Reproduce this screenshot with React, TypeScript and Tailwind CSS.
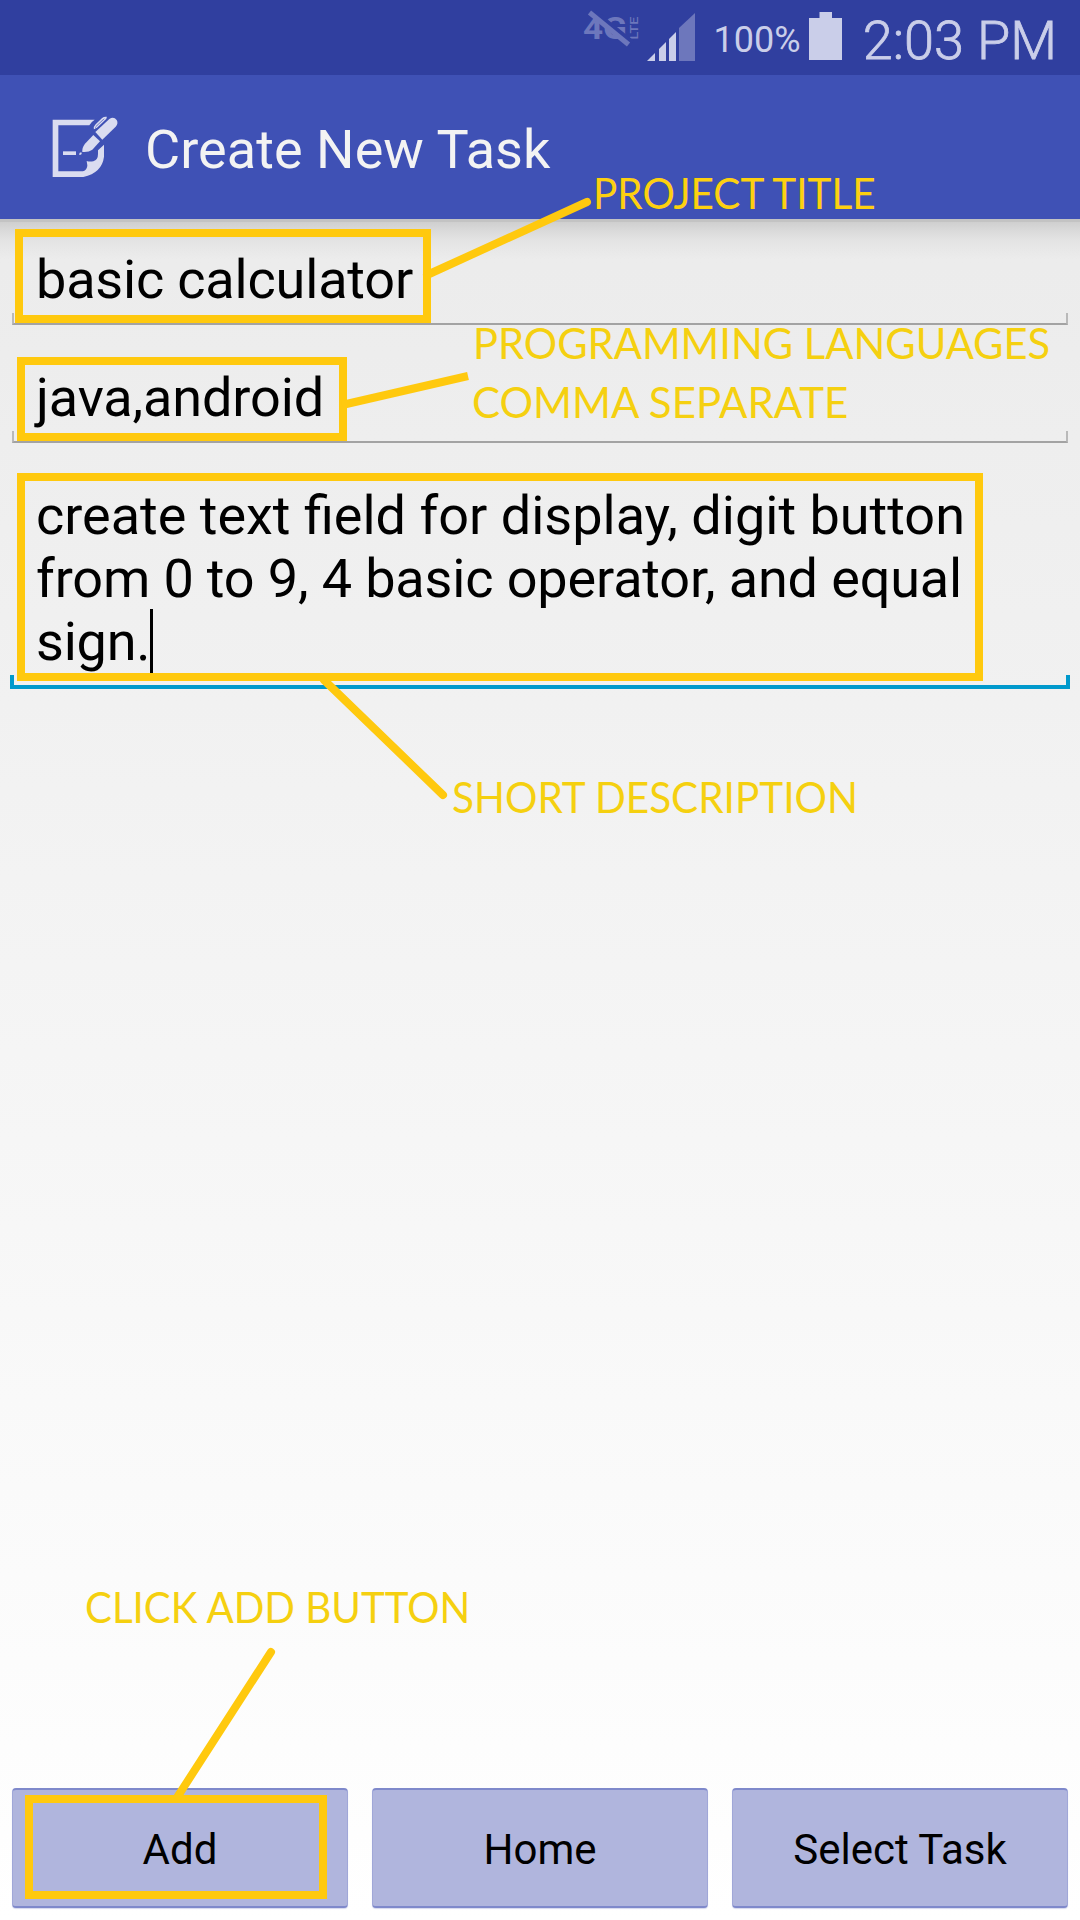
import React from "react";

function NetworkIcon() {
  return (
    <svg className="block h-[40px] w-[60px]" viewBox="0 0 60 40" fill="#6d77bc">
      <text x="1" y="31" fontFamily="Roboto" fontWeight="700" fontSize="31" textLength="44" lengthAdjust="spacingAndGlyphs">4G</text>
      <text transform="translate(55.5 31.5) rotate(-90)" fontFamily="Roboto" fontWeight="500" fontSize="11" textLength="23" lengthAdjust="spacingAndGlyphs">LTE</text>
      <path d="M13 5 L50 35" stroke="#303f9f" strokeWidth="6" />
      <path d="M7.5 4.5 L46.5 36.5" stroke="#6d77bc" strokeWidth="5" />
    </svg>
  );
}

function SignalIcon() {
  return (
    <svg className="block h-[48px] w-[48px]" viewBox="0 0 48 48" fill="#cacee9">
      <path d="M0 48 L8 40 V48Z" />
      <path d="M12 48 V36 L19 29 V48Z" />
      <path d="M22 48 V26 L29 19 V48Z" />
      <path d="M32 48 V15 L48 0 V48Z" fill="#6d77bc" />
    </svg>
  );
}

function BatteryIcon() {
  return (
    <svg className="block h-[48px] w-[33px]" viewBox="0 0 33 48" fill="#cacee9">
      <path d="M10.5 0 H23 V6 H33 V48 H0 V6 H10.5Z" />
    </svg>
  );
}

function NoteIcon() {
  return (
    <svg className="block h-[65px] w-[70px]" viewBox="150 135 210 195" fill="#dadcf0">
      <path d="M158 149 H284 Q274 155 268 166 H175 V304 H249 Q262 300 262 286 L260 273 Q268 276 280 274 Q294 270 294 252 V241 L312 224 V260 Q306 308 250 321 H158Z" />
      <path d="M189 244 H228 V255 H189Z" />
      <path d="M286 186 L328 147 Q341 138 350 150 Q356 160 347 170 L307 209Z" />
      <path d="M280 195 L300 214 L277 239 Q265 248 247 246 Q246 232 255 221Z" />
      <path d="M237 254 Q238 247 244 247 Q247 251 243 254Z" />
      <path d="M284 177 Q282 171 288 165 L308 146 Q313 142 320 143" fill="none" stroke="#dadcf0" strokeWidth="5" />
      <path d="M288 173 L318 145" fill="none" stroke="#dadcf0" strokeWidth="4" />
    </svg>
  );
}

function FieldLine() {
  return <div className="mx-3 h-3 border-x-2 border-b-2 border-x-[#b9b9b9] border-b-[#a3a3a3]" />;
}

function TaskButton({ label }: { label: string }) {
  return (
    <button className="h-[120px] w-[336px] rounded-[4px] border border-x-[#a0a7d8] border-t-2 border-b-2 border-t-[#7f89cb] border-b-[#7f89cb] bg-[#b0b5dd] pt-[3px] text-[42px] leading-[49px] text-black shadow-[0_1px_1px_#d5d8ee]">
      {label}
    </button>
  );
}

export default function App() {
  return (
    <div className="relative flex h-[1920px] w-[1080px] flex-col overflow-hidden bg-linear-to-b from-[#e9e9e9] to-white font-['Roboto',sans-serif]">
      <header>
        <div className="flex h-[75px] items-start justify-end bg-[#303f9f] pr-[23px] text-[#cacee9]">
          <div className="mr-[5px] pt-[8px]"><NetworkIcon /></div>
          <div className="mr-[19px] pt-[13px]"><SignalIcon /></div>
          <span className="mr-[8px] pt-[19px] text-[36px] leading-[42px]">100%</span>
          <div className="mr-[21px] pt-[12px]"><BatteryIcon /></div>
          <span className="pt-[9px] text-[54px] leading-[63px] font-light [-webkit-text-stroke:0.8px_#cacee9]">2:03 PM</span>
        </div>
        <div className="flex h-[144px] items-center bg-[#3f51b5] pl-[50px]">
          <NoteIcon />
          <h1 className="ml-[25px] pt-[5px] text-[54px] leading-[63px] tracking-[0.06px] text-[#f3f3f3]">Create New Task</h1>
        </div>
      </header>

      <main className="flex grow flex-col bg-[linear-gradient(#c3c3c3_0,#c3c3c3_3px,#cfcfcf_3px,#d9d9d9_11px,#e4e4e4_22px,transparent_40px)] text-[54px] leading-[63px] text-black">
        <div className="h-[94px] px-9 pt-[29px] tracking-[-0.18px]">basic calculator</div>
        <FieldLine />
        <div className="h-[106px] px-9 pt-[41px] tracking-[-0.12px]">java,android</div>
        <FieldLine />
        <div className="h-[232px] px-9 pt-[41px]">
          <p>create text field for display, digit button</p>
          <p className="tracking-[-0.14px]">from 0 to 9, 4 basic operator, and equal</p>
          <p className="flex h-[63px] items-center tracking-[-0.2px]">
            sign.<span className="h-[65px] w-[3px] bg-black" />
          </p>
        </div>
        <div className="mx-[10px] h-[14px] border-x-4 border-b-4 border-[#0099cc]" />
      </main>

      <footer className="flex h-[132px] gap-6 px-3">
        <TaskButton label="Add" />
        <TaskButton label="Home" />
        <TaskButton label="Select Task" />
      </footer>

      <div className="absolute top-[229px] left-[15px] h-[94px] w-[416px] border-8 border-[#ffc90e]" />
      <div className="absolute top-[357px] left-[17px] h-[84px] w-[330px] border-8 border-[#ffc90e]" />
      <div className="absolute top-[473px] left-[17px] h-[208px] w-[966px] border-8 border-[#ffc90e]" />
      <div className="absolute top-[1795px] left-[25px] h-[104px] w-[302px] border-8 border-[#ffc90e]" />
      <svg className="pointer-events-none absolute top-0 left-0 h-[1920px] w-[1080px]" viewBox="0 0 1080 1920" fill="none" stroke="#ffc90e" strokeWidth="8" strokeLinecap="round">
        <path d="M427 275 L587 202" />
        <path d="M342 405 L468 376" strokeLinecap="butt" />
        <path d="M324 680 L443 795" />
        <path d="M178 1796 L271 1652" />
      </svg>
      <div className="font-['Lato',sans-serif] text-[42px] leading-[50px] whitespace-nowrap text-[#f5d010]">
        <span className="absolute top-[168px] left-[593px] origin-left scale-x-[0.965] text-[#fdd010]">PROJECT TITLE</span>
        <span className="absolute top-[318px] left-[473px] origin-left scale-x-[0.992]">PROGRAMMING LANGUAGES</span>
        <span className="absolute top-[377px] left-[472px] origin-left">COMMA SEPARATE</span>
        <span className="absolute top-[772px] left-[452px] origin-left scale-x-[0.965]">SHORT DESCRIPTION</span>
        <span className="absolute top-[1582px] left-[85px] origin-left scale-x-[0.959]">CLICK ADD BUTTON</span>
      </div>
    </div>
  );
}
